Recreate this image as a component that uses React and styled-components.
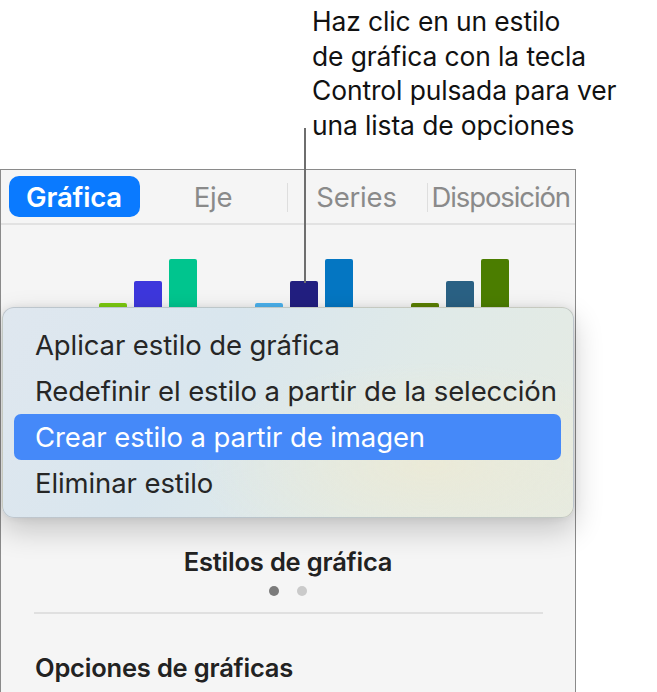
import React from "react";
import styled, { createGlobalStyle } from "styled-components";

const Global = createGlobalStyle`
  html, body { margin: 0; padding: 0; background: #ffffff; }
  body { overflow: hidden; }
  * { box-sizing: border-box; }
`;

const Page = styled.div`
  position: relative;
  width: 657px;
  height: 692px;
  overflow: hidden;
  background: #fff;
  font-family: Inter, "Noto Sans", sans-serif;
`;

const Callout = styled.p`
  margin: 0;
  padding: 4px 0 0 312px;
  height: 169px;
  font-family: Inter, "Liberation Sans", sans-serif;
  font-size: 26.4px;
  line-height: 34.6px;
  letter-spacing: -0.1px;
  color: #111;
`;

const Leader = styled.div`
  position: absolute;
  left: 304px;
  top: 128px;
  width: 2px;
  height: 155px;
  background: #6e6e6e;
  z-index: 2;
`;

const Panel = styled.section`
  width: 576px;
  height: 523px;
  background: #f5f5f5;
  border: 1.5px solid #8a8a8a;
  border-bottom: none;
  display: flex;
  flex-direction: column;
`;

const TabBar = styled.nav`
  height: 55px;
  flex: none;
  display: grid;
  grid-template-columns: 131px 147px 140px 1fr;
  align-items: center;
  padding: 0 0 0 7.5px;
  border-bottom: 2px solid #e2e2e2;
`;

const Tab = styled.div`
  height: 41px;
  display: flex;
  align-items: center;
  justify-content: center;
  font-size: 27.5px;
  white-space: nowrap;
  letter-spacing: ${(p) => (p.$tight ? "-1.1px" : "-0.2px")};
  border-radius: 10px;
  color: ${(p) => (p.$active ? "#ffffff" : "#8a8a8a")};
  background: ${(p) => (p.$active ? "#0a7aff" : "transparent")};
  font-weight: ${(p) => (p.$active ? 600 : 400)};
  position: relative;
  ${(p) =>
    p.$sep
      ? `&::before { content: ""; position: absolute; left: 0; top: 7px; height: 29px; width: 1.5px; background: #dedede; }`
      : ""}
`;

const StyleGrid = styled.div`
  height: 318px;
  flex: none;
  display: flex;
  align-items: flex-start;
  padding: 33.5px 0 0 97.5px;
  gap: 58px;
`;

const Thumb = styled.div`
  width: 98px;
  height: 121px;
  display: flex;
  align-items: flex-end;
  gap: 7px;
`;

const Bar = styled.div`
  width: 28px;
  border-radius: 2px 2px 0 0;
  background: ${(p) => p.$c};
`;

const Title = styled.h3`
  margin: 0;
  padding-top: 4px;
  text-align: center;
  font-size: 25.5px;
  font-weight: 600;
  color: #222;
  line-height: 30px;
  letter-spacing: -0.2px;
`;

const Dots = styled.div`
  display: flex;
  justify-content: center;
  gap: 18px;
  padding-top: 8.5px;
  height: 18.5px;
  flex: none;
`;

const Dot = styled.span`
  width: 10px;
  height: 10px;
  border-radius: 50%;
  background: ${(p) => (p.$on ? "#7b7b7b" : "#cacaca")};
`;

const Separator = styled.hr`
  margin: 16.5px 0 0 33px;
  width: 509px;
  border: none;
  height: 2px;
  flex: none;
  background: #e0e0e0;
`;

const Section = styled.h4`
  margin: 0;
  padding: 39px 0 0 34px;
  font-size: 25.5px;
  font-weight: 600;
  color: #222;
  line-height: 30px;
  letter-spacing: -0.2px;
`;

const Menu = styled.ul`
  position: absolute;
  left: 2px;
  top: 307px;
  width: 572px;
  height: 211px;
  margin: 0;
  padding: 14px 12px 0 11px;
  list-style: none;
  border-radius: 12px;
  border: 1px solid rgba(0, 0, 0, 0.14);
  background:
    radial-gradient(ellipse 60% 70% at 75% 75%, rgba(236, 234, 214, 0.9), rgba(236, 234, 214, 0) 70%),
    linear-gradient(120deg, #dfe7ef 0%, #d9e6ee 35%, #e0eae8 65%, #e6ebe2 100%);
  box-shadow: 0 12px 30px rgba(0, 0, 0, 0.2), 0 0 8px rgba(0, 0, 0, 0.08);
  z-index: 3;
`;

const Item = styled.li`
  height: 46px;
  display: flex;
  align-items: center;
  padding-left: 21px;
  border-radius: 7px;
  font-size: 27.5px;
  letter-spacing: -0.1px;
  white-space: nowrap;
  color: ${(p) => (p.$hl ? "#ffffff" : "#262626")};
  background: ${(p) => (p.$hl ? "#4589f9" : "transparent")};
`;

const thumbs = [
  ["#7ccb10", "#3d37dc", "#00c58e"],
  ["#4cb2ee", "#221f80", "#0476c2"],
  ["#5a7f00", "#2a6184", "#4b7d00"],
];

export default function App() {
  return (
    <Page>
      <Global />
      <Callout>
        Haz clic en un estilo
        <br />
        de gráfica con la tecla
        <br />
        Control pulsada para ver
        <br />
        una lista de opciones
      </Callout>
      <Leader />
      <Panel>
        <TabBar>
          <Tab $active>Gráfica</Tab>
          <Tab>Eje</Tab>
          <Tab $sep>Series</Tab>
          <Tab $sep $tight>Disposición</Tab>
        </TabBar>
        <StyleGrid>
          {thumbs.map((cols, i) => (
            <Thumb key={i}>
              <Bar $c={cols[0]} style={{ height: 77 }} />
              <Bar $c={cols[1]} style={{ height: 99 }} />
              <Bar $c={cols[2]} style={{ height: 121 }} />
            </Thumb>
          ))}
        </StyleGrid>
        <Title>Estilos de gráfica</Title>
        <Dots>
          <Dot $on />
          <Dot />
        </Dots>
        <Separator />
        <Section>Opciones de gráficas</Section>
      </Panel>
      <Menu>
        <Item>Aplicar estilo de gráfica</Item>
        <Item>Redefinir el estilo a partir de la selección</Item>
        <Item $hl>Crear estilo a partir de imagen</Item>
        <Item>Eliminar estilo</Item>
      </Menu>
    </Page>
  );
}
